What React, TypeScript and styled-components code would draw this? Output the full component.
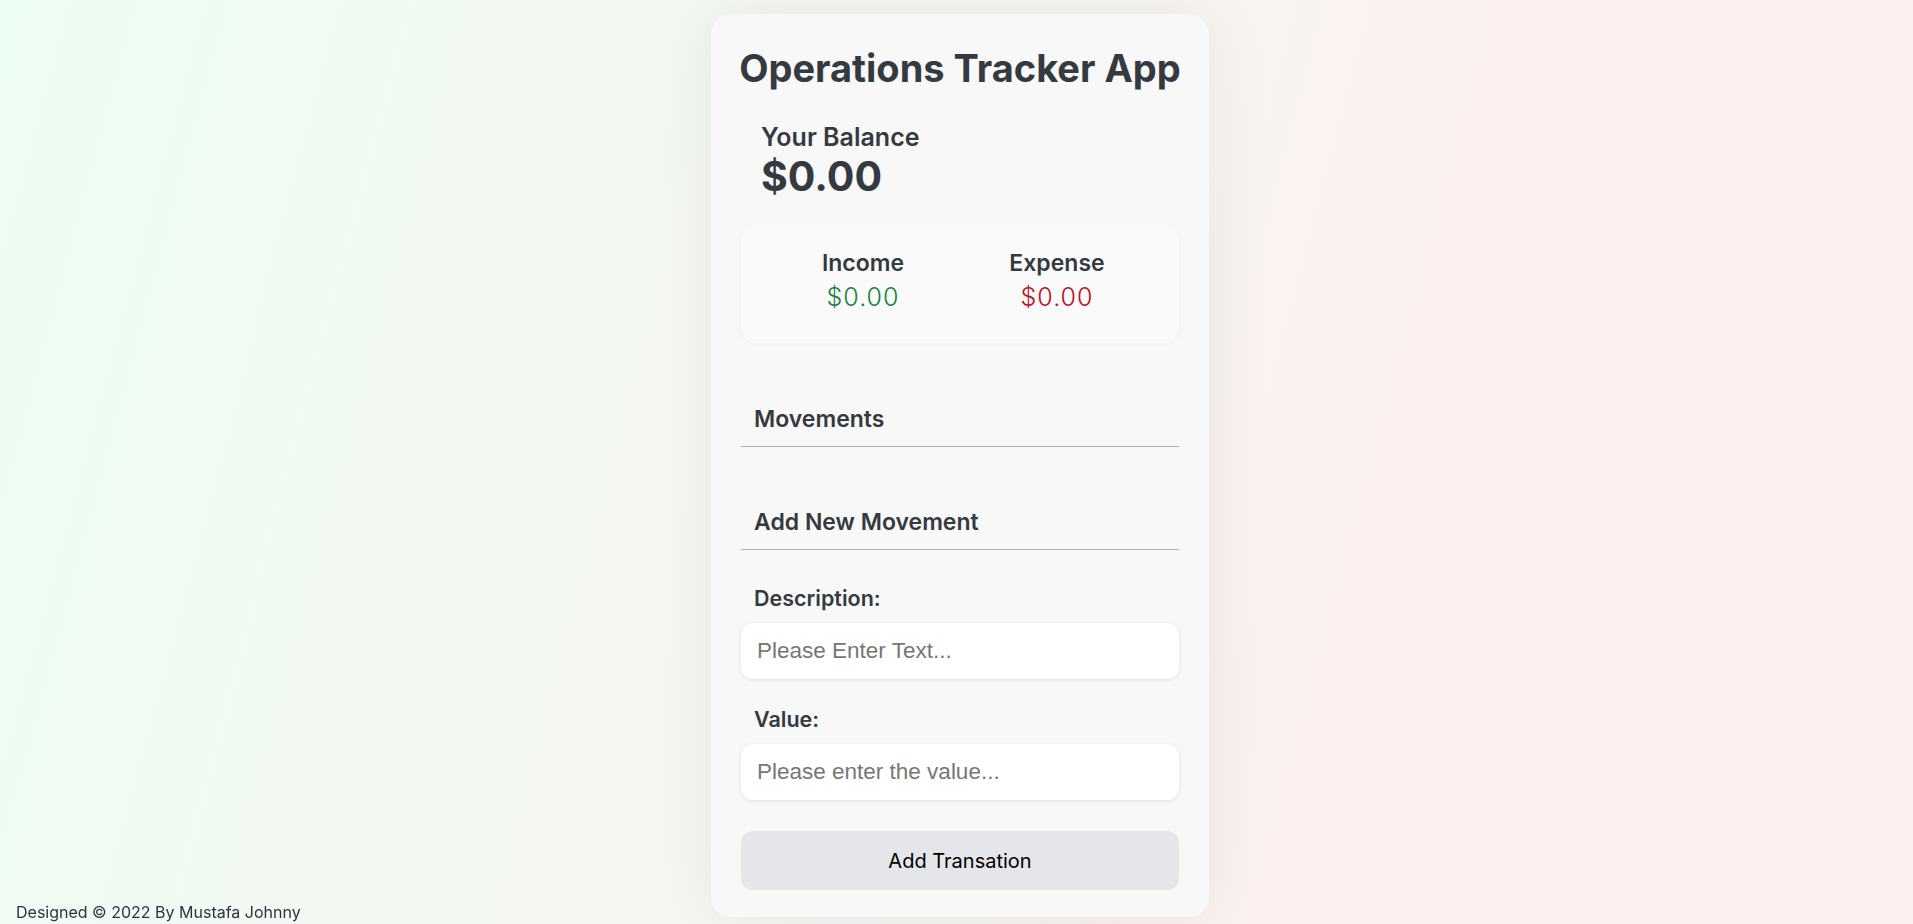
import React from "react";
import styled, { createGlobalStyle } from "styled-components";

const GlobalStyle = createGlobalStyle`
  * { box-sizing: border-box; }
  html, body { margin: 0; padding: 0; }
  body {
    min-height: 100vh;
    font-family: Inter, "Noto Sans", sans-serif;
    color: #343a40;
    background: linear-gradient(105deg, #ecfdf3 0%, #f5f7f2 38%, #f8f5f1 55%, #fcf0ef 72%, #fdf0ef 100%);
  }
`;

const Page = styled.main`
  min-height: 100vh;
  display: flex;
  justify-content: center;
  align-items: flex-start;
  padding: 14px 0 0 7px;
`;

const Card = styled.section`
  width: 498px;
  background: #f8f8f8;
  border-radius: 20px;
  padding: 30px 30px 27px;
  box-shadow: 0 0 70px rgba(0, 0, 0, 0.07);
  display: flex;
  flex-direction: column;
`;

const Title = styled.h1`
  margin: 0 -10px;
  font-size: 38px;
  line-height: 48px;
  font-weight: 700;
  text-align: center;
  white-space: nowrap;
  color: #343a40;
`;

const BalanceBlock = styled.div`
  margin-top: 30px;
  padding-left: 20px;
`;

const BalanceLabel = styled.h3`
  margin: 0;
  font-size: 25px;
  line-height: 30px;
  font-weight: 600;
`;

const BalanceValue = styled.div`
  font-size: 41px;
  line-height: 48px;
  font-weight: 700;
`;

const Summary = styled.div`
  margin-top: 24px;
  height: 119px;
  padding-top: 25px;
  background: #fafafa;
  border-radius: 16px;
  box-shadow: 0 1px 6px rgba(0, 0, 0, 0.04);
  display: grid;
  grid-template-columns: 194px 194px;
  justify-content: center;
  align-content: start;
`;

const SummaryItem = styled.div`
  display: flex;
  flex-direction: column;
  align-items: center;
`;

const SummaryLabel = styled.h4`
  margin: 0;
  font-size: 23px;
  line-height: 28px;
  font-weight: 600;
`;

const SummaryValue = styled.span<{ $tone: "income" | "expense" }>`
  margin-top: 5px;
  font-size: 25px;
  line-height: 30px;
  font-weight: 300;
  letter-spacing: 1px;
  color: ${(p) => (p.$tone === "income" ? "#17833f" : "#bd1024")};
`;

const SectionHeading = styled.h3<{ $gap: number }>`
  margin: ${(p) => p.$gap}px 0 0;
  padding: 0 13px 12px;
  font-size: 23px;
  line-height: 30px;
  font-weight: 600;
  border-bottom: 1px solid #a9b0ba;
`;

const MovementList = styled.ul`
  list-style: none;
  margin: 0;
  padding: 0;
`;

const Form = styled.form`
  display: flex;
  flex-direction: column;
`;

const Label = styled.label<{ $gap: number }>`
  margin-top: ${(p) => p.$gap}px;
  padding-left: 13px;
  font-size: 21.5px;
  line-height: 24px;
  font-weight: 600;
`;

const Input = styled.input`
  margin-top: 13px;
  height: 56px;
  width: 100%;
  border: none;
  outline: none;
  border-radius: 12px;
  background: #ffffff;
  padding: 0 16px;
  font-family: "Liberation Sans", Arial, sans-serif;
  font-size: 22.5px;
  color: #343a40;
  box-shadow: 0 1px 4px rgba(0, 0, 0, 0.1);
  &::placeholder { color: #767676; }
`;

const Button = styled.button`
  margin-top: 31px;
  height: 59px;
  width: 100%;
  border: none;
  border-radius: 12px;
  background: #e5e6ea;
  font-family: Inter, sans-serif;
  font-size: 20px;
  color: #000;
  cursor: pointer;
`;

const Footer = styled.footer`
  position: fixed;
  left: 16px;
  bottom: 2px;
  font-size: 16px;
  line-height: 20px;
  color: #2f343a;
`;

export default function App() {
  return (
    <>
      <GlobalStyle />
      <Page>
        <Card>
          <Title>Operations Tracker App</Title>
          <BalanceBlock>
            <BalanceLabel>Your Balance</BalanceLabel>
            <BalanceValue>$0.00</BalanceValue>
          </BalanceBlock>
          <Summary>
            <SummaryItem>
              <SummaryLabel>Income</SummaryLabel>
              <SummaryValue $tone="income">$0.00</SummaryValue>
            </SummaryItem>
            <SummaryItem>
              <SummaryLabel>Expense</SummaryLabel>
              <SummaryValue $tone="expense">$0.00</SummaryValue>
            </SummaryItem>
          </Summary>
          <SectionHeading $gap={61}>Movements</SectionHeading>
          <MovementList />
          <SectionHeading $gap={60}>Add New Movement</SectionHeading>
          <Form onSubmit={(e) => e.preventDefault()}>
            <Label $gap={36} htmlFor="desc">Description:</Label>
            <Input id="desc" type="text" placeholder="Please Enter Text..." />
            <Label $gap={28} htmlFor="val">Value:</Label>
            <Input id="val" type="number" placeholder="Please enter the value..." />
            <Button type="submit">Add Transation</Button>
          </Form>
        </Card>
      </Page>
      <Footer>Designed © 2022 By Mustafa Johnny</Footer>
    </>
  );
}
